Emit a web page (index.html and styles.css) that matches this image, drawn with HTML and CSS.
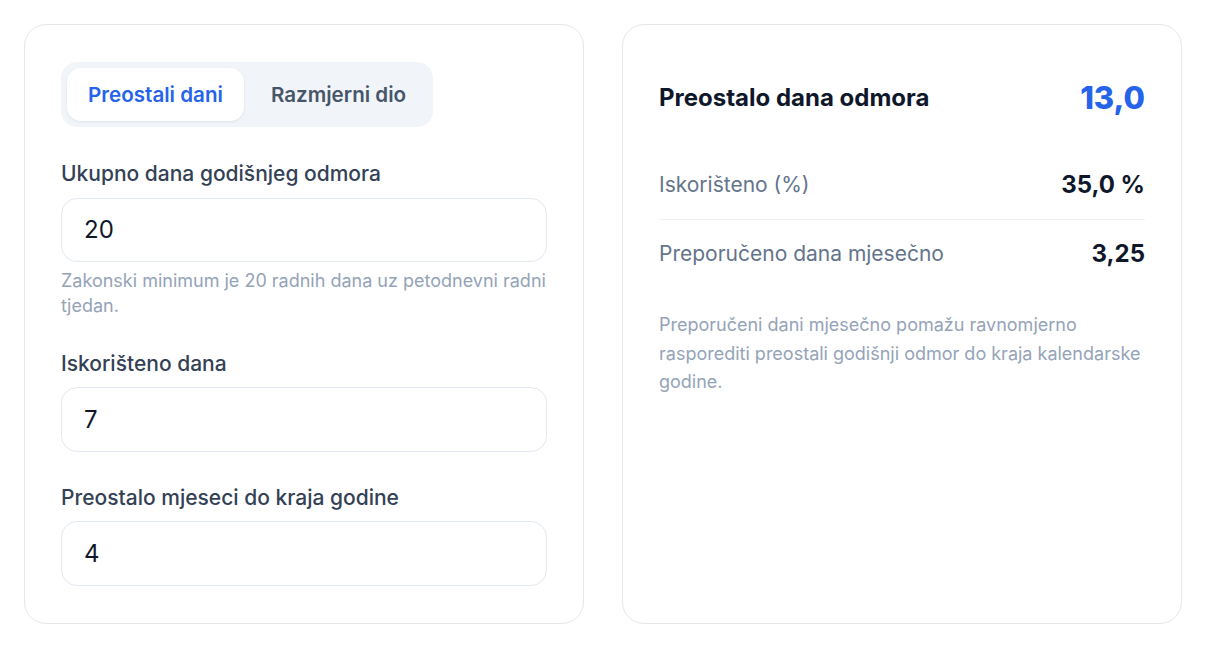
FILE: index.html
```html
<!DOCTYPE html>
<html lang="hr">
<head>
<meta charset="utf-8">
<title>Kalkulator godišnjeg odmora</title>
<link rel="stylesheet" href="styles.css">
</head>
<body>
<div class="page">
  <section class="card card-form">
    <div class="tabs">
      <button class="tab tab-active">Preostali dani</button>
      <button class="tab">Razmjerni dio</button>
    </div>
    <div class="field field-first">
      <label class="label">Ukupno dana godišnjeg odmora</label>
      <div class="input">20</div>
      <p class="help">Zakonski minimum je 20 radnih dana uz petodnevni radni tjedan.</p>
    </div>
    <div class="field">
      <label class="label">Iskorišteno dana</label>
      <div class="input">7</div>
    </div>
    <div class="field">
      <label class="label">Preostalo mjeseci do kraja godine</label>
      <div class="input">4</div>
    </div>
  </section>
  <section class="card card-result">
    <div class="result-head">
      <span class="result-title">Preostalo dana odmora</span>
      <span class="result-big">13,0</span>
    </div>
    <div class="row row-divided">
      <span class="row-label">Iskorišteno (%)</span>
      <span class="row-value">35,0 %</span>
    </div>
    <div class="row">
      <span class="row-label">Preporučeno dana mjesečno</span>
      <span class="row-value">3,25</span>
    </div>
    <p class="note">Preporučeni dani mjesečno pomažu ravnomjerno rasporediti preostali godišnji odmor do kraja kalendarske godine.</p>
  </section>
</div>
</body>
</html>
```
FILE: styles.css
```css
* { box-sizing: border-box; }
html, body { margin: 0; padding: 0; background: #ffffff; }
body { font-family: Inter, "Noto Sans", sans-serif; color: #0f172a; }

.page {
  display: grid;
  grid-template-columns: 560px 560px;
  gap: 38px;
  padding: 24px;
  align-items: stretch;
}

.card {
  background: #ffffff;
  border: 1px solid #e5e7eb;
  border-radius: 22px;
}

.card-form { padding: 37px 36px 37px 36px; }

.tabs {
  display: inline-flex;
  gap: 6px;
  padding: 6px;
  background: #f1f5f9;
  border-radius: 16px;
}
.tab {
  font-family: inherit;
  font-size: 20.6px;
  font-weight: 600;
  color: #475569;
  background: transparent;
  border: 0;
  height: 53px;
  padding: 0 21px;
  border-radius: 14px;
}
.tab-active {
  background: #ffffff;
  color: #2563eb;
  box-shadow: 0 1px 3px rgba(15, 23, 42, 0.08);
}

.field { display: flex; flex-direction: column; margin-top: 32px; }
.field-first { margin-top: 33px; }
.label {
  font-size: 21px;
  font-weight: 500;
  line-height: 28px;
  color: #334155;
  margin-bottom: 9.5px;
}
.input {
  height: 64.5px;
  border: 1px solid #e2e8f0;
  border-radius: 16px;
  padding: 0 22px;
  display: flex;
  align-items: center;
  font-size: 24px;
  color: #0f172a;
}
.help {
  margin: 5.5px 0 0;
  font-size: 18px;
  line-height: 25px;
  color: #94a3b8;
}

.card-result { padding: 37px 36px; }
.result-head {
  display: flex;
  justify-content: space-between;
  align-items: center;
  padding: 18px 0 35px;
}
.result-title { font-size: 24px; font-weight: 700; color: #0f172a; line-height: 36px; }
.result-big { font-size: 31px; font-weight: 800; color: #2563eb; line-height: 36px; }

.row {
  display: flex;
  justify-content: space-between;
  align-items: center;
  padding: 20px 0;
}
.row-divided { border-bottom: 1px solid #eef2f6; }
.row-label { font-size: 21px; color: #64748b; line-height: 28px; }
.row-value { font-size: 24px; font-weight: 700; color: #0f172a; line-height: 28px; }

.note {
  margin: 23px 0 0;
  font-size: 18px;
  line-height: 28.5px;
  color: #94a3b8;
}
```
